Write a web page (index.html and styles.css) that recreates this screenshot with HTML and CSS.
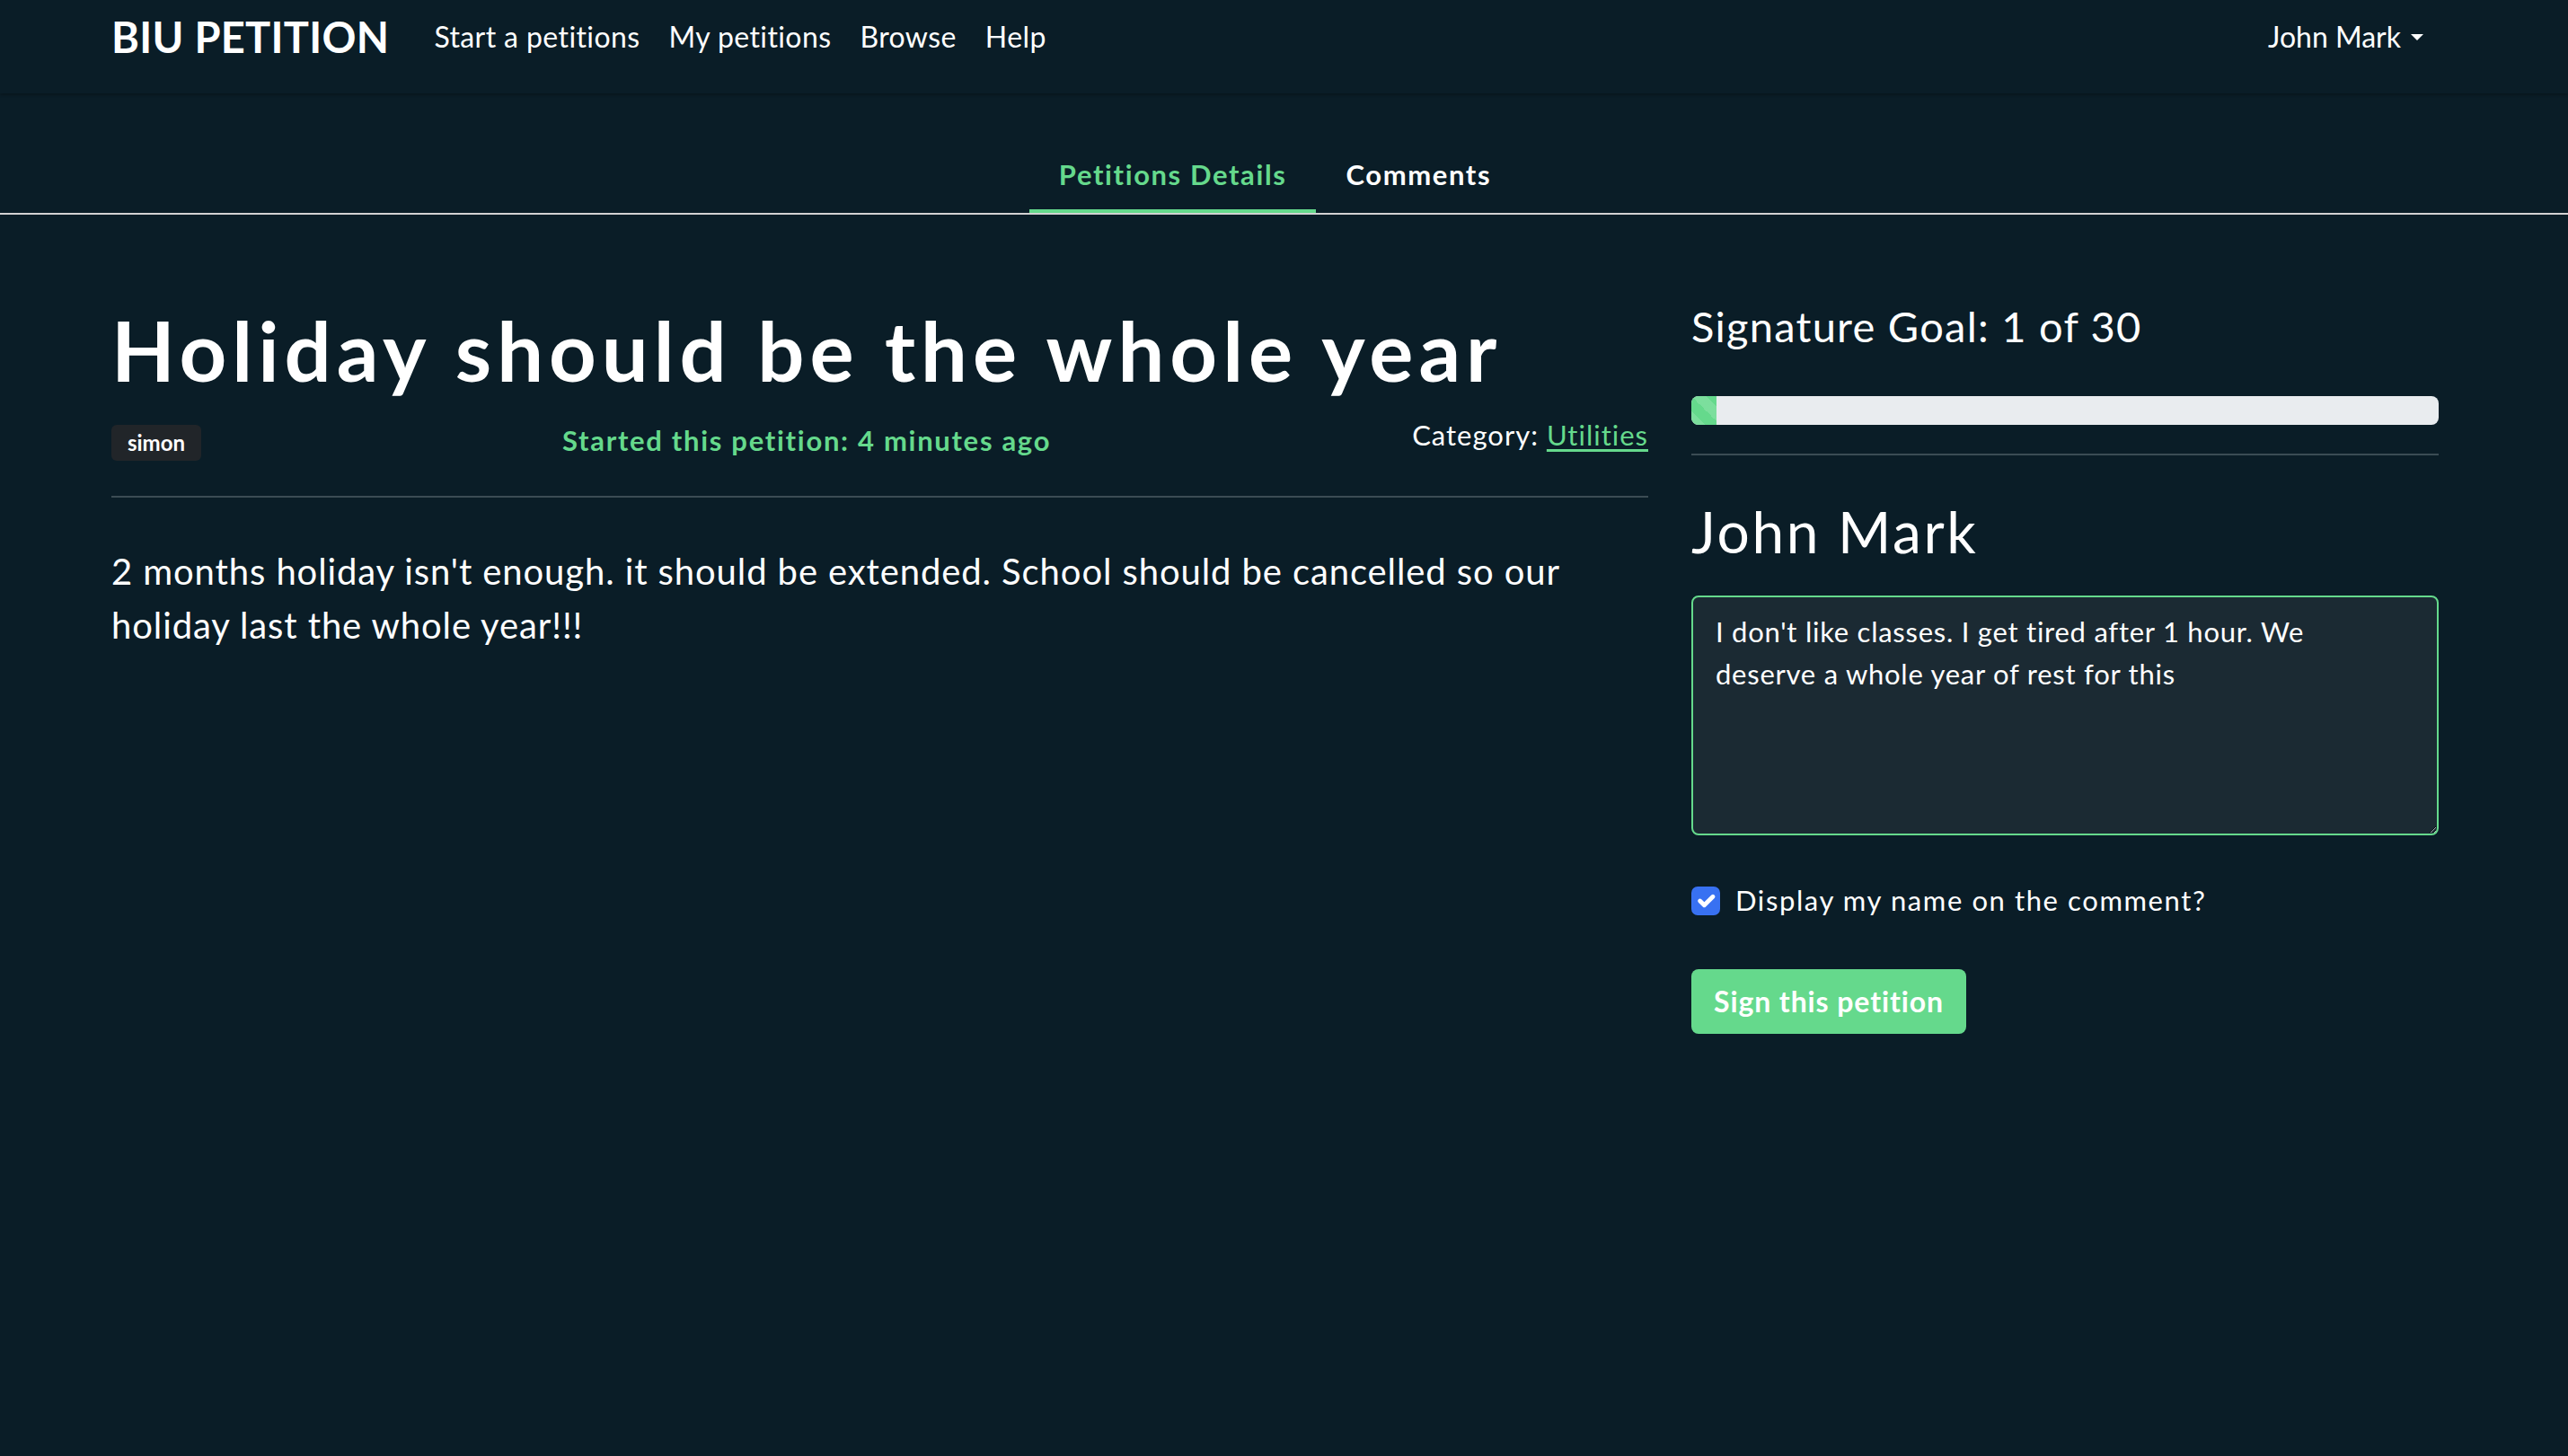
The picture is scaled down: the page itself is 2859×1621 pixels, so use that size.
FILE: index.html
```html
<!DOCTYPE html>
<html lang="en">
<head>
<meta charset="utf-8">
<title>BIU Petition – Holiday should be the whole year</title>
<link rel="stylesheet" href="styles.css">
</head>
<body>
  <nav class="navbar">
    <div class="container navbar-inner">
      <a class="brand" href="#">BIU PETITION</a>
      <ul class="nav-links">
        <li><a href="#">Start a petitions</a></li>
        <li><a href="#">My petitions</a></li>
        <li><a href="#">Browse</a></li>
        <li><a href="#">Help</a></li>
      </ul>
      <a class="user-menu" href="#">John Mark<span class="caret"></span></a>
    </div>
  </nav>

  <div class="tabs">
    <a class="tab active" href="#">Petitions Details</a>
    <a class="tab" href="#">Comments</a>
  </div>

  <main class="container content">
    <section class="details">
      <h1 class="petition-title">Holiday should be the whole year</h1>
      <div class="meta">
        <span class="badge">simon</span>
        <span class="started">Started this petition: 4 minutes ago</span>
        <span class="category">Category: <a href="#">Utilities</a></span>
      </div>
      <hr class="rule rule-meta">
      <p class="lead">2 months holiday isn't enough. it should be extended. School should be cancelled so our holiday last the whole year!!!</p>
    </section>

    <aside class="sign">
      <h4 class="goal">Signature Goal: 1 of 30</h4>
      <div class="progress"><div class="progress-bar" style="width: 3.33%"></div></div>
      <hr class="rule rule-goal">
      <h2 class="signer">John Mark</h2>
      <textarea class="comment" rows="5">I don't like classes. I get tired after 1 hour. We
deserve a whole year of rest for this</textarea>
      <label class="check">
        <input type="checkbox" checked>
        <span>Display my name on the comment?</span>
      </label>
      <button class="btn-sign" type="button">Sign this petition</button>
    </aside>
  </main>
</body>
</html>
```

FILE: styles.css
```css
* {
  box-sizing: border-box;
}

html,
body {
  margin: 0;
  padding: 0;
}

body {
  min-height: 1621px;
  background: #0a1d27;
  color: #ffffff;
  font-family: "Lato", "Open Sans", "Liberation Sans", sans-serif;
  font-size: 32px;
  line-height: 1.5;
}

a {
  color: inherit;
  text-decoration: none;
}

.container {
  width: 2591px;
  margin-left: 124px;
}

/* ---------- top navbar ---------- */
.navbar {
  height: 104px;
  background: #0a1d27;
  box-shadow: 0 2px 3px rgba(0, 0, 0, 0.25);
  position: relative;
}

.navbar-inner {
  height: 82px;
  display: flex;
  align-items: center;
}

.brand {
  font-size: 47px;
  font-weight: 700;
  line-height: 1.2;
  letter-spacing: 0.3px;
  margin-right: 34px;
}

.nav-links {
  list-style: none;
  margin: 0;
  padding: 0;
  display: flex;
}

.nav-links a {
  display: block;
  padding: 0 16px;
  font-size: 32px;
  line-height: 48px;
  letter-spacing: 0.4px;
}

.user-menu {
  margin-left: auto;
  padding: 0 17px;
  font-size: 32px;
  line-height: 48px;
  display: flex;
  align-items: center;
}

.caret {
  display: inline-block;
  margin-left: 11px;
  border-top: 7px solid #ffffff;
  border-left: 7.5px solid transparent;
  border-right: 7.5px solid transparent;
}

/* ---------- tabs ---------- */
.tabs {
  display: flex;
  justify-content: center;
  padding: 66px 20px 0 0;
  border-bottom: 2px solid #d2d2d2;
}

.tab {
  padding: 0 33px 15px;
  font-size: 31px;
  font-weight: 700;
  line-height: 48px;
  letter-spacing: 1.6px;
  color: #ffffff;
  border-bottom: 4px solid transparent;
}

.tab.active {
  color: #65d98c;
  border-bottom-color: #65d98c;
}

/* ---------- content ---------- */
.content {
  display: grid;
  grid-template-columns: 1711px 832px;
  column-gap: 48px;
  padding-top: 96px;
}

.petition-title {
  margin: 0 0 15px;
  font-size: 92px;
  font-weight: 700;
  line-height: 1.2;
  letter-spacing: 6px;
}

.meta {
  display: flex;
  justify-content: space-between;
  align-items: flex-start;
}

.badge {
  margin-top: 13px;
  width: 100px;
  height: 40px;
  display: flex;
  align-items: center;
  justify-content: center;
  background: #212529;
  border-radius: 6px;
  font-size: 24px;
  font-weight: 700;
  line-height: 1;
}

.started {
  margin-top: 7px;
  color: #65d98c;
  font-size: 31px;
  font-weight: 700;
  letter-spacing: 1.7px;
}

.category {
  margin-top: 1px;
  font-size: 31px;
  letter-spacing: 1px;
}

.category a {
  color: #65d98c;
  text-decoration: underline;
  text-underline-offset: 4px;
}

.rule {
  border: 0;
  height: 2px;
  background: #3b4c54;
}

.rule-meta {
  margin: 38px 0 0;
}

.lead {
  margin: 52px 0 0;
  font-size: 40px;
  line-height: 60px;
  letter-spacing: 0.9px;
}

/* ---------- signing panel ---------- */
.goal {
  margin: 0;
  font-size: 47px;
  font-weight: 400;
  line-height: 1.2;
  letter-spacing: 1.25px;
}

.progress {
  margin-top: 50px;
  height: 32px;
  background: #e9ecef;
  border-radius: 8px;
  overflow: hidden;
}

.progress-bar {
  height: 100%;
  background-color: #65d98c;
  background-image: linear-gradient(45deg,
      rgba(255, 255, 255, 0.15) 25%, transparent 25%,
      transparent 50%, rgba(255, 255, 255, 0.15) 50%,
      rgba(255, 255, 255, 0.15) 75%, transparent 75%, transparent);
  background-size: 33px 33px;
}

.rule-goal {
  margin: 32px 0 0;
}

.signer {
  margin: 47px 0 0;
  font-size: 64px;
  font-weight: 400;
  line-height: 1.2;
  letter-spacing: 2.6px;
}

.comment {
  display: block;
  margin-top: 32px;
  width: 100%;
  height: 267px;
  padding: 15px 25px 11px;
  background: #1b2a33;
  color: #ffffff;
  border: 2px solid #65d98c;
  border-radius: 8px;
  font-family: inherit;
  font-size: 31px;
  line-height: 47px;
  letter-spacing: 0.75px;
  resize: vertical;
  outline: none;
}

.check {
  margin-top: 49px;
  display: flex;
  align-items: flex-start;
  gap: 17px;
  font-size: 31px;
  line-height: 46.5px;
  letter-spacing: 1.6px;
}

.check input {
  -webkit-appearance: none;
  appearance: none;
  margin: 8px 0 0;
  width: 32px;
  height: 32px;
  flex: none;
  border-radius: 7px;
  background-color: #3871f2;
  background-image: url("data:image/svg+xml,%3csvg xmlns='http://www.w3.org/2000/svg' viewBox='0 0 20 20'%3e%3cpath fill='none' stroke='%23fff' stroke-linecap='round' stroke-linejoin='round' stroke-width='3' d='M6 10l3 3l6-6'/%3e%3c/svg%3e");
  background-size: 100% 100%;
}

.btn-sign {
  margin-top: 53px;
  display: block;
  height: 72px;
  padding: 0 25px;
  background: #65d98c;
  color: #ffffff;
  border: 0;
  border-radius: 8px;
  font-family: inherit;
  font-size: 32px;
  font-weight: 700;
  letter-spacing: 0.9px;
}
```
